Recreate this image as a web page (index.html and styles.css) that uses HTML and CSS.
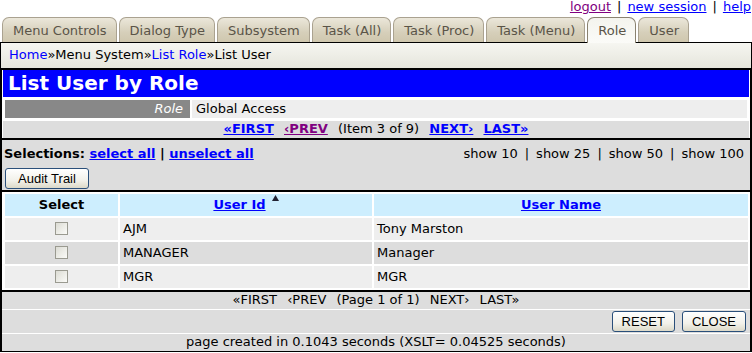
FILE: index.html
```html
<!DOCTYPE html>
<html lang="en">
  <head>
    <meta charset="UTF-8" />
    <meta name="viewport" content="width=device-width, initial-scale=1.0" />
    <link rel="stylesheet" href="styles.css">
    <title>List User by Role</title>
  </head>
  <body>
    <div class="toplinks">
      <a href="#" class="visited">logout</a><span class="sep">|</span><a href="#">new session</a><span class="sep">|</span><a href="#">help</a>
    </div>

    <ul class="tabs">
      <li>Menu Controls</li>
      <li>Dialog Type</li>
      <li>Subsystem</li>
      <li>Task (All)</li>
      <li>Task (Proc)</li>
      <li>Task (Menu)</li>
      <li class="active">Role</li>
      <li>User</li>
    </ul>

    <div class="panel">
      <div class="crumbs">
        <a href="#">Home</a>&raquo;Menu System&raquo;<a href="#">List Role</a>&raquo;List User
      </div>

      <div class="main">
        <h1 class="title">List User by Role</h1>

        <div class="parent">
          <div class="label">Role</div>
          <div class="value">Global Access</div>
        </div>

        <div class="pager">
          <a href="#">&laquo;FIRST</a>
          <a href="#" class="visited">&lsaquo;PREV</a>
          <span class="plain">(Item 3 of 9)</span>
          <a href="#">NEXT&rsaquo;</a>
          <a href="#">LAST&raquo;</a>
        </div>

        <div class="selections">
          <div class="sel-line">
            <div class="sel-left">
              Selections: <a href="#">select all</a> | <a href="#">unselect all</a>
            </div>
            <div class="sel-right">
              show 10<span class="sep">|</span>show 25<span class="sep">|</span>show 50<span class="sep">|</span>show 100
            </div>
          </div>
          <button class="btn audit">Audit Trail</button>
        </div>

        <div class="grid">
          <div class="th">Select</div>
          <div class="th"><a href="#">User Id</a><svg class="sort" width="7" height="6" viewBox="0 0 7 6"><path d="M3.5 0 L7 6 L0 6 Z" fill="#223"/></svg></div>
          <div class="th"><a href="#">User Name</a></div>

          <div class="td center odd"><input type="checkbox" class="chk"></div>
          <div class="td odd">AJM</div>
          <div class="td odd">Tony Marston</div>

          <div class="td center even"><input type="checkbox" class="chk"></div>
          <div class="td even">MANAGER</div>
          <div class="td even">Manager</div>

          <div class="td center odd"><input type="checkbox" class="chk"></div>
          <div class="td odd">MGR</div>
          <div class="td odd">MGR</div>
        </div>

        <div class="pager bottom">
          <span>&laquo;FIRST</span>
          <span>&lsaquo;PREV</span>
          <span>(Page 1 of 1)</span>
          <span>NEXT&rsaquo;</span>
          <span>LAST&raquo;</span>
        </div>

        <div class="actions">
          <button class="btn">RESET</button>
          <button class="btn">CLOSE</button>
        </div>

        <div class="timer">page created in 0.1043 seconds (XSLT= 0.04525 seconds)</div>
      </div>
    </div>
  </body>
</html>
```

FILE: styles.css
```css
body {
  margin: 0;
  font-family: "DejaVu Sans", Verdana, sans-serif;
  font-size: 13px;
  color: #000;
  background: #fff;
}

a {
  color: #0000ff;
}
a.visited {
  color: #800080;
}

.toplinks {
  height: 17px;
  line-height: 13px;
  text-align: right;
  padding-right: 1px;
}
.toplinks .sep {
  margin: 0 6px;
}

/* tabs */
.tabs {
  display: flex;
  gap: 2px;
  margin: 0 0 0 2px;
  padding: 0;
  list-style: none;
  position: relative;
  z-index: 1;
}
.tabs li {
  height: 24px;
  line-height: 25px;
  padding: 0 9px 0 10px;
  color: #5a5448;
  border: 1px solid #aaa290;
  border-bottom: none;
  border-radius: 7px 7px 0 0;
  background: linear-gradient(#ebe7da, #d6cfba 60%, #cfc7ae);
}
.tabs li.active {
  height: 25px;
  margin-bottom: -1px;
  border-color: #8a8270;
  background: linear-gradient(#f4f4ee, #fbfbf8);
}

.panel {
  border: 1px solid #000;
}

.crumbs {
  height: 25px;
  line-height: 24px;
  padding-left: 8px;
  background: linear-gradient(#f6f6f1, #e5e5dc);
}
.crumbs a {
  text-decoration: none;
}

.main {
  border-top: 2px solid #000;
  border-left: 1px solid #000;
  border-right: 1px solid #000;
}

.title {
  margin: 0 1px;
  height: 27px;
  padding-left: 5px;
  background: #0000ff;
  color: #fff;
  font-size: 20px;
  line-height: 27px;
  font-weight: bold;
}

.parent {
  display: flex;
  gap: 2px;
  margin: 3px 3px 0 3px;
  height: 18px;
  line-height: 18px;
}
.parent .label {
  width: 178px;
  padding-right: 7px;
  text-align: right;
  background: #888;
  color: #fff;
  font-style: italic;
}
.parent .value {
  flex: 1;
  padding-left: 4px;
  background: #eee;
}

.pager {
  margin: 3px 1px 0;
  height: 17px;
  line-height: 16px;
  text-align: center;
  background: #ddd;
}
.pager a {
  font-weight: bold;
  margin: 0 3px;
}
.pager .plain {
  margin: 0 3px;
}

.selections {
  border-top: 2px solid #000;
  border-bottom: 2px solid #000;
  background: #ddd;
  height: 50px;
  padding: 0 1px;
}
.sel-line {
  display: flex;
  justify-content: space-between;
  padding-top: 7px;
  line-height: 14px;
}
.sel-left {
  font-weight: bold;
  padding-left: 1px;
}
.sel-right {
  padding-right: 5px;
}
.sel-right .sep {
  margin: 0 7px;
}

.btn {
  font-family: "Liberation Sans", Arial, sans-serif;
  font-size: 13px;
  height: 21px;
  padding: 0 8px;
  color: #000;
  border: 1px solid #2a4f7a;
  border-radius: 3px;
  background: linear-gradient(#ffffff, #f2f1ea 60%, #dcd9c8);
}
.audit {
  margin: 7px 0 0 2px;
  width: 84px;
}

.grid {
  display: grid;
  grid-template-columns: 113px 252px 1fr;
  gap: 2px;
  padding: 2px 2px 2px 3px;
  background: #fff;
  border-bottom: 2px solid #000;
}
.th {
  height: 22px;
  line-height: 22px;
  background: #cdeefe;
  text-align: center;
  font-weight: bold;
}
.th .sort {
  vertical-align: 8px;
  margin-left: 6px;
}
.td {
  height: 22px;
  line-height: 22px;
  padding-left: 3px;
}
.td.center {
  padding: 0;
  text-align: center;
}
.odd {
  background: #eee;
}
.even {
  background: #ddd;
}

.chk {
  appearance: none;
  width: 13px;
  height: 13px;
  margin: 0;
  vertical-align: -2px;
  border: 1px solid #9a9a90;
  background: linear-gradient(135deg, #dcdcd4, #fbfbf8);
}

.pager.bottom {
  margin: 0;
  height: 17px;
  border-bottom: 1px solid #fff;
}
.pager.bottom span {
  margin: 0 3px;
}

.actions {
  display: flex;
  justify-content: flex-end;
  gap: 7px;
  height: 23px;
  align-items: center;
  padding-right: 4px;
  background: #ddd;
  border-bottom: 1px solid #fff;
}
.actions .btn {
  height: 21px;
  padding: 0 9px;
}

.timer {
  height: 17px;
  line-height: 16px;
  text-align: center;
  background: #ddd;
}
```
